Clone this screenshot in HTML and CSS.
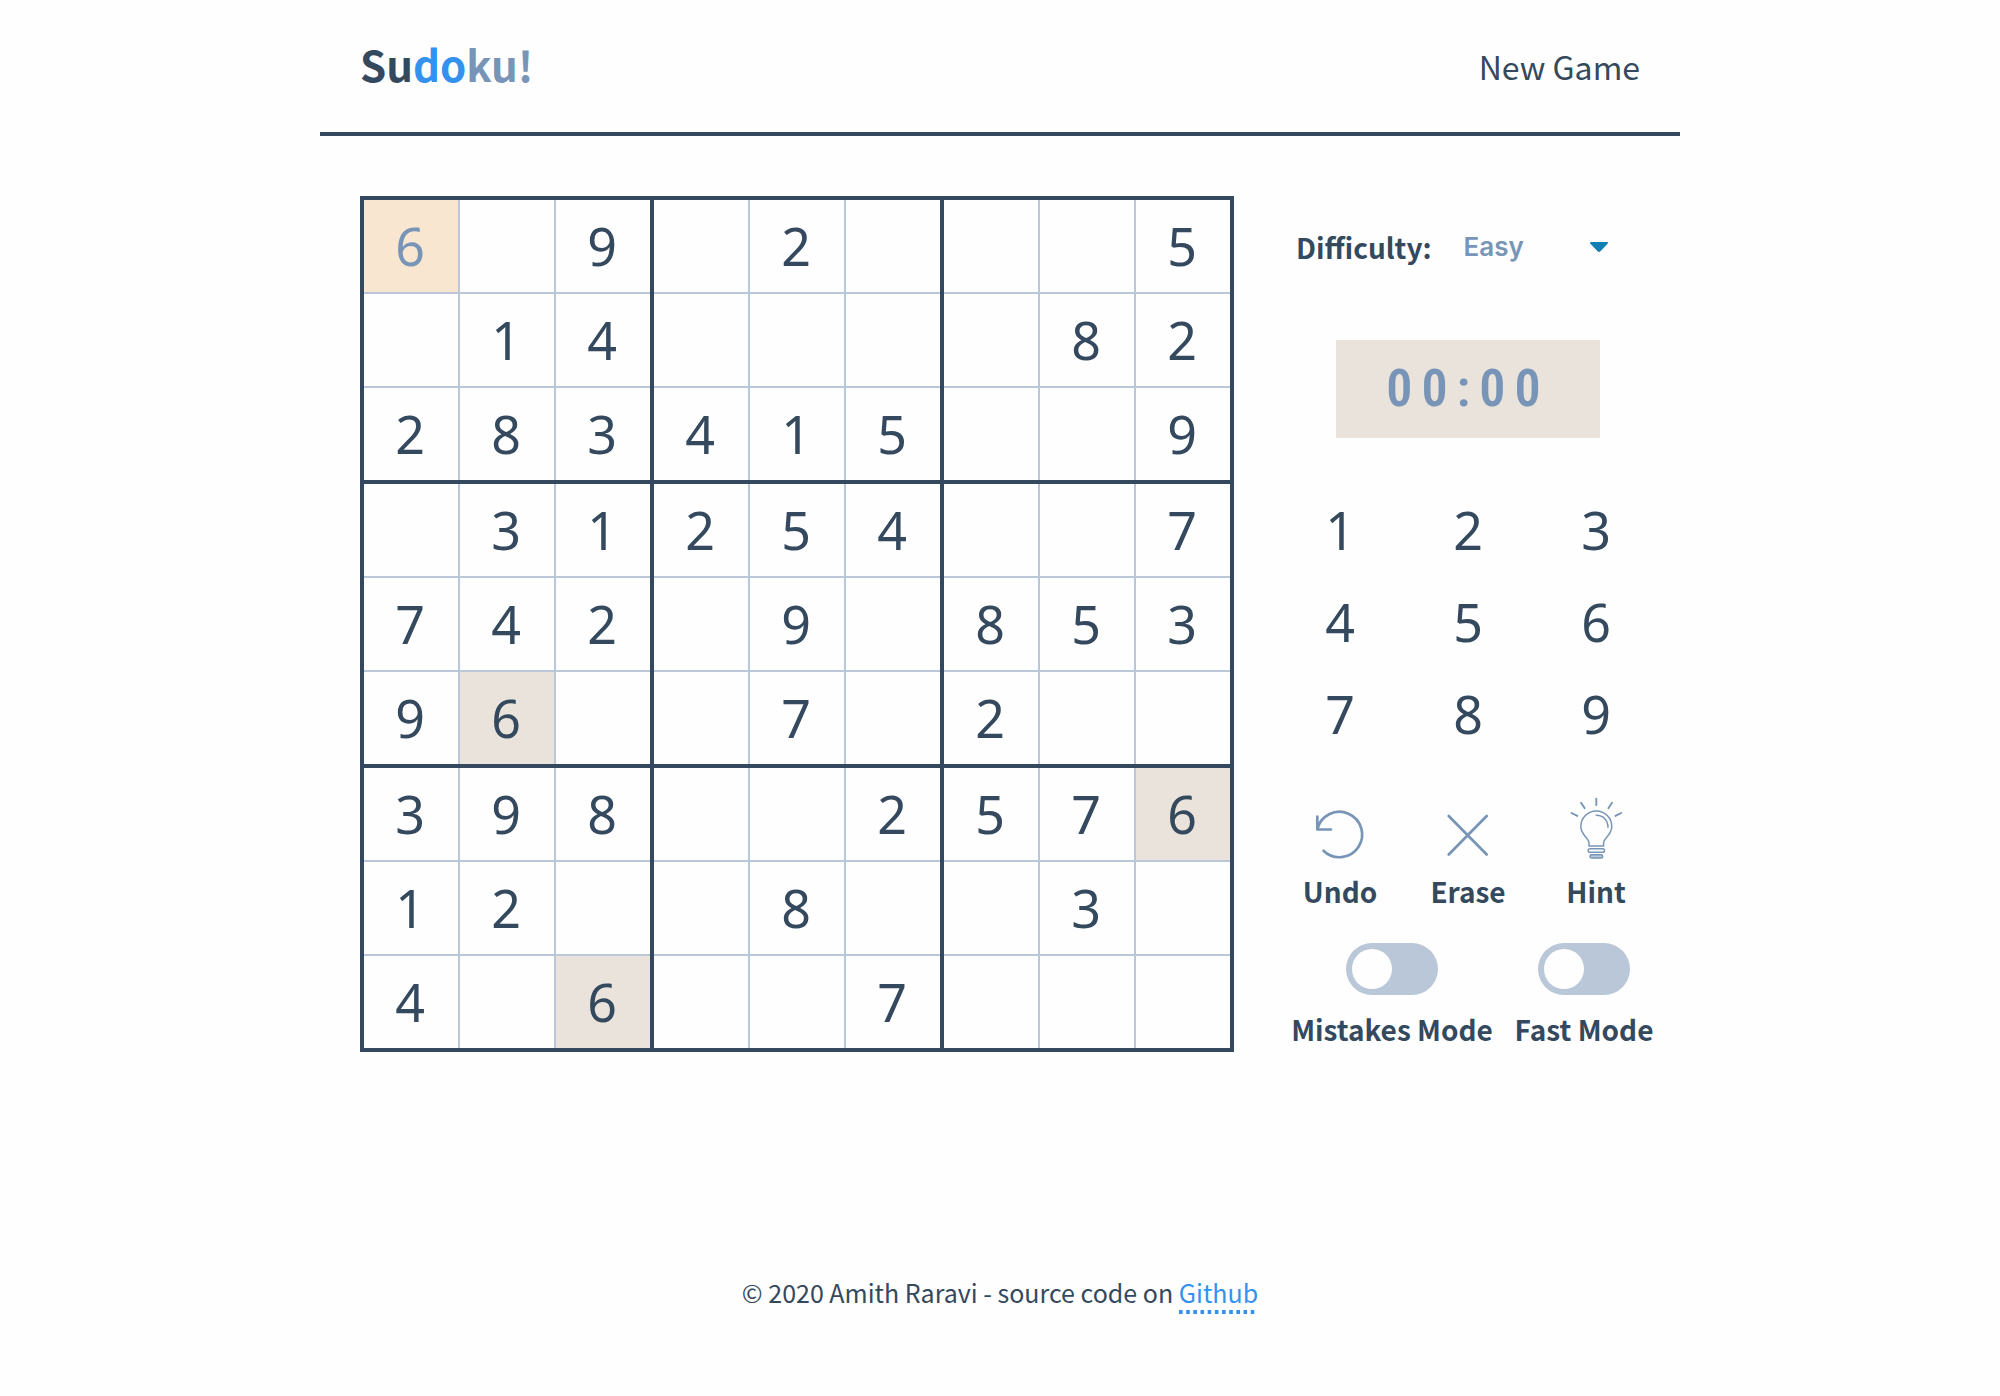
FILE: index.html
```html
<!DOCTYPE html>
<html lang="en">
<head>
<meta charset="utf-8">
<meta name="viewport" content="width=device-width, initial-scale=1">
<title>Sudoku!</title>
<link rel="stylesheet" href="styles.css">
</head>
<body>
<div class="container">
  <header class="header">
    <h1 class="logo">Su<span class="logo-two">do</span><span class="logo-three">ku!</span></h1>
    <button class="new-game" type="button">New Game</button>
  </header>
  <main class="game">
    <table class="board" aria-label="Sudoku board">
      <tbody>
        <tr><td class="selected">6</td><td></td><td>9</td><td></td><td>2</td><td></td><td></td><td></td><td>5</td></tr>
        <tr><td></td><td>1</td><td>4</td><td></td><td></td><td></td><td></td><td>8</td><td>2</td></tr>
        <tr><td>2</td><td>8</td><td>3</td><td>4</td><td>1</td><td>5</td><td></td><td></td><td>9</td></tr>
        <tr><td></td><td>3</td><td>1</td><td>2</td><td>5</td><td>4</td><td></td><td></td><td>7</td></tr>
        <tr><td>7</td><td>4</td><td>2</td><td></td><td>9</td><td></td><td>8</td><td>5</td><td>3</td></tr>
        <tr><td>9</td><td class="same">6</td><td></td><td></td><td>7</td><td></td><td>2</td><td></td><td></td></tr>
        <tr><td>3</td><td>9</td><td>8</td><td></td><td></td><td>2</td><td>5</td><td>7</td><td class="same">6</td></tr>
        <tr><td>1</td><td>2</td><td></td><td></td><td>8</td><td></td><td></td><td>3</td><td></td></tr>
        <tr><td>4</td><td></td><td class="same">6</td><td></td><td></td><td>7</td><td></td><td></td><td></td></tr>
      </tbody>
    </table>
    <section class="status">
      <div class="difficulty">
        <label for="difficulty">Difficulty:</label>
        <select id="difficulty" class="difficulty-select">
          <option selected>Easy</option>
          <option>Medium</option>
          <option>Hard</option>
        </select>
        <svg class="caret" width="18" height="10" viewBox="0 0 18 10" aria-hidden="true"><path d="M1 0h16q1.6.4.6 1.7L10.400 9.200q-1.400 1.400-2.800 0L.4 1.700Q-.6.4 1 0z"/></svg>
      </div>
      <div class="timer">00:00</div>
      <div class="numpad">
        <button type="button">1</button><button type="button">2</button><button type="button">3</button>
        <button type="button">4</button><button type="button">5</button><button type="button">6</button>
        <button type="button">7</button><button type="button">8</button><button type="button">9</button>
      </div>
      <div class="actions">
        <button class="action" type="button">
          <svg viewBox="0 0 64 64" stroke-width="2.700" aria-hidden="true"><path d="M15.500 53.700A22.700 22.700 0 1 0 9.300 32.500M9.300 19.500v13H23"/></svg>
          Undo
        </button>
        <button class="action" type="button">
          <svg viewBox="0 0 64 64" stroke-width="2.700" aria-hidden="true"><path d="M12.700 19l38 38.500M50.700 19l-38 38.500"/></svg>
          Erase
        </button>
        <button class="action" type="button">
          <svg viewBox="0 0 64 64" stroke-width="1.500" aria-hidden="true">
            <path stroke-width="1.900" d="M32.300 1.700V8M17 5.700l3.700 5.600M48 5.700l-3.600 5.600M7.500 16l5.800 2.900M57.200 16l-5.800 2.900"/>
            <path d="M25 49v-3c0-5-8.200-8-8.200-16.500a15.500 15.500 0 0 1 31 0C47.800 38 39.600 41 39.600 46v3z"/>
            <path d="M32.300 18.300c7 0 11.700 5 11.700 12"/>
            <rect x="24.200" y="51.700" width="16.300" height="3.600" rx="1.800"/>
            <rect class="bulb-cap" x="26" y="57.700" width="12.700" height="3.300" rx="1.600"/>
          </svg>
          Hint
        </button>
      </div>
      <div class="modes">
        <label class="mode"><input class="switch" type="checkbox"><span>Mistakes Mode</span></label>
        <label class="mode"><input class="switch" type="checkbox"><span>Fast Mode</span></label>
      </div>
    </section>
  </main>
</div>
<footer class="footer">© 2020 Amith Raravi - source code on <a href="#">Github</a></footer>
</body>
</html>
```
FILE: styles.css
```css
:root {
  --ink: #34495e;
  --blue: #3492ee;
  --muted: #7895b7;
  --line: #bac7d9;
  --beige: #eae3dc;
  --peach: #f8e6d0;
  --sans: "Noto Sans CJK SC", sans-serif;
  --digits: "Noto Sans", sans-serif;
}

* { box-sizing: border-box; }

body {
  margin: 0;
  background: #fefefe;
  color: var(--ink);
  font-family: var(--sans);
}

button {
  margin: 0;
  padding: 0;
  border: 0;
  background: none;
  color: inherit;
  font: inherit;
  cursor: pointer;
}

.container {
  width: 68%;
  min-width: 1100px;
  margin: 0 auto;
}

.header {
  display: flex;
  justify-content: space-between;
  align-items: flex-start;
  padding: 32px 40px 36px;
  border-bottom: 4px solid var(--ink);
}

.logo {
  margin: 0;
  font-size: 42px;
  line-height: 64px;
  font-weight: 700;
}

.logo-two { color: var(--blue); }
.logo-three { color: var(--muted); }

.new-game {
  font-size: 32px;
  line-height: 68px;
  height: 64px;
}

.game {
  display: grid;
  grid-template-columns: 874fr 384fr;
  gap: 42px;
  align-items: start;
  padding: 60px 20px 0 40px;
}

.board {
  width: 100%;
  table-layout: fixed;
  border-collapse: collapse;
  border: 4px solid var(--ink);
  font-family: var(--digits);
  font-size: 52px;
  line-height: 72px;
  text-align: center;
}

.board td {
  box-sizing: content-box;
  width: 92px;
  height: 92px;
  padding: 0 2px 0 0;
  border: 2px solid var(--line);
}

.board td:first-child { border-left: 4px solid var(--ink); }
.board td:nth-child(3n) { border-right: 4px solid var(--ink); }
.board tr:first-child td { border-top: 4px solid var(--ink); }
.board tr:nth-child(3n) td { border-bottom: 4px solid var(--ink); }

.board .selected {
  background: var(--peach);
  color: var(--muted);
}

.board .same { background: var(--beige); }

.status {
  display: flex;
  flex-direction: column;
}

.difficulty {
  display: flex;
  align-items: center;
  height: 102px;
  padding: 0 52px 0 20px;
  font-size: 28px;
  line-height: 40px;
  font-weight: 700;
}

.difficulty-select {
  flex: 1;
  margin-left: 32px;
  padding: 0;
  border: 0;
  appearance: none;
  background: none;
  color: var(--muted);
  font: 600 26px/40px Inter, sans-serif;
}

.caret { fill: #117eb4; }

.timer {
  align-self: center;
  width: 264px;
  margin-top: 42px;
  background: var(--beige);
  color: var(--muted);
  font: 600 52px/98px "Liberation Sans Narrow", "Roboto Condensed", Roboto, sans-serif;
  letter-spacing: 9px;
  text-align: center;
}

.numpad {
  display: grid;
  grid-template-columns: repeat(3, 1fr);
  margin-top: 46px;
  font-family: var(--digits);
  font-size: 52px;
  line-height: 92px;
}

.actions {
  display: grid;
  grid-template-columns: repeat(3, 1fr);
  margin-top: 37px;
}

.action {
  display: flex;
  flex-direction: column;
  align-items: center;
  gap: 8px;
  font-size: 28px;
  line-height: 44px;
  font-weight: 700;
}

.action svg {
  width: 64px;
  height: 64px;
  fill: none;
  stroke: var(--muted);
  stroke-linecap: round;
  stroke-linejoin: round;
}

.action .bulb-cap { fill: var(--line); }

.modes {
  display: grid;
  grid-template-columns: repeat(2, 192px);
  justify-content: end;
  margin: 30px -20px 0 0;
}

.mode {
  display: flex;
  flex-direction: column;
  align-items: center;
  gap: 12px;
  font-size: 28px;
  line-height: 44px;
  font-weight: 700;
  white-space: nowrap;
}

.switch {
  width: 92px;
  height: 52px;
  margin: 0;
  padding: 6px;
  border-radius: 26px;
  appearance: none;
  background: var(--line);
  cursor: pointer;
}

.switch::before {
  content: "";
  display: block;
  width: 40px;
  height: 40px;
  border-radius: 50%;
  background: #fefefe;
}

.switch:checked { background: var(--blue); }
.switch:checked::before { margin-left: auto; }

.footer {
  padding: 216px 20px 60px;
  font-size: 25px;
  line-height: 48px;
  text-align: center;
}

.footer a {
  padding-bottom: 4px;
  background: linear-gradient(to right, var(--blue) 4px, transparent 4px) left bottom / 7px 4px round no-repeat;
  color: var(--blue);
  text-decoration: none;
}
```
